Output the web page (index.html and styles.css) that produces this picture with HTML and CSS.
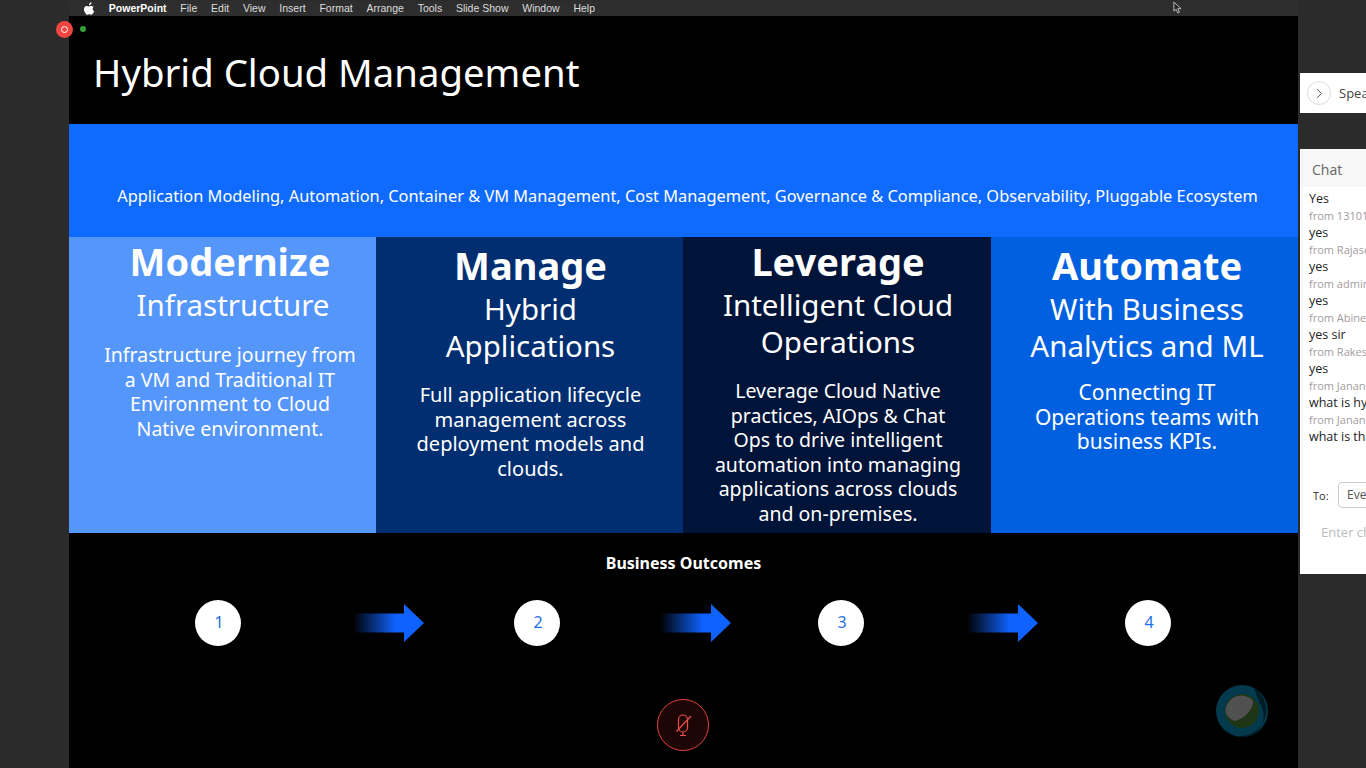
FILE: index.html
```html
<!DOCTYPE html>
<html>
  <head>
    <meta name="viewport" content="width=device-width,initial-scale=1.0" />
    <title>Hybrid Cloud Management</title>
    <link rel="stylesheet" href="styles.css">
  </head>
  <body>
    <div id="main">
      <div class="gutter">
        <div class="rec"><span class="rec-ring"></span></div>
      </div>

      <div class="stage">
        <div class="menubar">
          <svg class="apple" viewBox="0 0 14 16" width="11" height="13">
            <path fill="#fff" d="M9.6 0c.1 1-.3 1.9-.8 2.6-.6.7-1.5 1.2-2.4 1.1-.1-.9.3-1.9.8-2.5C7.8.6 8.8.1 9.6 0zM12.6 5.5c-1 .6-1.6 1.6-1.6 2.8 0 1.400.8 2.500 2 3-.4 1-.8 1.900-1.400 2.800-.7 1-1.400 1.900-2.400 1.900-1 0-1.300-.6-2.500-.6s-1.500.6-2.500.6c-1 0-1.800-1-2.400-2C.6 12.600 0 10.600 0 8.900c0-2.700 1.700-4.200 3.500-4.200 1 0 1.800.7 2.500.7.600 0 1.600-.7 2.800-.7 1.500 0 2.800.7 3.800 1.800z"/>
          </svg>
          <span class="menu-app">PowerPoint</span>
          <span>File</span>
          <span>Edit</span>
          <span>View</span>
          <span>Insert</span>
          <span>Format</span>
          <span>Arrange</span>
          <span>Tools</span>
          <span>Slide Show</span>
          <span>Window</span>
          <span>Help</span>
          <svg class="cursor" viewBox="0 0 10 14" width="9" height="13">
            <path fill="#222" stroke="#ccc" stroke-width="1" d="M1 1v10l2.500-2 1.800 4 1.800-.8-1.800-3.900H9z"/>
          </svg>
        </div>

        <div class="slide">
          <span class="green-dot"></span>
          <h1 class="title">Hybrid Cloud Management</h1>

          <div class="banner">Application Modeling, Automation, Container &amp; VM Management, Cost Management, Governance &amp; Compliance, Observability, Pluggable Ecosystem</div>

          <div class="columns">
            <div class="col col-1">
              <h2>Modernize</h2>
              <h3>Infrastructure</h3>
              <p>Infrastructure journey from<br>a VM and Traditional IT<br>Environment to Cloud<br>Native environment.</p>
            </div>
            <div class="col col-2">
              <h2>Manage</h2>
              <h3>Hybrid<br>Applications</h3>
              <p>Full application lifecycle<br>management across<br>deployment models and<br>clouds.</p>
            </div>
            <div class="col col-3">
              <h2>Leverage</h2>
              <h3>Intelligent Cloud<br>Operations</h3>
              <p>Leverage Cloud Native<br>practices, AIOps &amp; Chat<br>Ops to drive intelligent<br>automation into managing<br>applications across clouds<br>and on-premises.</p>
            </div>
            <div class="col col-4">
              <h2>Automate</h2>
              <h3>With Business<br>Analytics and ML</h3>
              <p>Connecting IT<br>Operations teams with<br>business KPIs.</p>
            </div>
          </div>

          <div class="outcomes">Business Outcomes</div>
          <div class="steps">
            <div class="step">1</div>
            <svg class="arrow arrow-1" viewBox="0 0 71 38" width="71" height="38"><use href="#arrow-shape"/></svg>
            <div class="step step-2">2</div>
            <svg class="arrow arrow-2" viewBox="0 0 71 38" width="71" height="38"><use href="#arrow-shape"/></svg>
            <div class="step step-3">3</div>
            <svg class="arrow arrow-3" viewBox="0 0 71 38" width="71" height="38"><use href="#arrow-shape"/></svg>
            <div class="step step-4">4</div>
          </div>

          <div class="mic">
            <svg viewBox="0 0 20 24" width="20" height="24" fill="none" stroke="#e8504a" stroke-width="1.200">
              <rect x="5.500" y="2" width="9" height="17" rx="4.500"/>
              <path d="M10 19v3M7 22.500h6M3.500 18.500L18 3"/>
            </svg>
          </div>

          <svg class="blob" viewBox="0 0 52 52" width="52" height="52">
            <circle cx="26" cy="26" r="26" fill="#033a4e"/>
            <path d="M38 3a26 26 0 0 1-26 45l-3-5a20 20 0 0 0 35-24z" fill="#021c26"/>
            <circle cx="26" cy="26" r="17" fill="#1e3616"/>
            <path d="M9.500 28a16 16 0 0 1 28-12c-1 9-9 18-19 20a16 16 0 0 1-9-8z" fill="#505050"/>
          </svg>
        </div>
      </div>

      <div class="side">
        <div class="speaker">
          <span class="speaker-btn">
            <svg viewBox="0 0 8 12" width="7" height="11" fill="none" stroke="#555" stroke-width="1.100"><path d="M1 1l5.500 5L1 11"/></svg>
          </span>
          <span class="speaker-name">Speaker</span>
        </div>
        <div class="chat">
          <div class="chat-head">Chat</div>
          <ul class="messages">
            <li>Yes</li>
            <li class="from">from 131012</li>
            <li>yes</li>
            <li class="from">from Rajasekar</li>
            <li>yes</li>
            <li class="from">from admin</li>
            <li>yes</li>
            <li class="from">from Abinesh</li>
            <li>yes sir</li>
            <li class="from">from Rakesh</li>
            <li>yes</li>
            <li class="from">from Janani</li>
            <li>what is hybrid</li>
            <li class="from">from Janani</li>
            <li>what is the</li>
          </ul>
          <div class="to">
            <span class="to-label">To:</span>
            <span class="to-select">Everyone</span>
          </div>
          <div class="enter">Enter chat message</div>
        </div>
      </div>
    </div>

    <svg width="0" height="0" class="defs">
      <defs>
        <linearGradient id="arrow-fade" x1="0" x2="1" y1="0" y2="0">
          <stop offset="0" stop-color="#0f62fe" stop-opacity="0"/>
          <stop offset="0.6" stop-color="#0f62fe"/>
        </linearGradient>
        <path id="arrow-shape" fill="url(#arrow-fade)" d="M0 9.500h51V0l20 19-20 19v-9.500H0z"/>
      </defs>
    </svg>
  </body>
</html>
```

FILE: styles.css
```css
html, body {
  margin: 0;
  height: 768px;
  overflow: hidden;
  background: #2b2b2b;
}
body {
  font-family: "Noto Sans", "Open Sans", sans-serif;
}
h1, h2, h3, p, ul {
  margin: 0;
  padding: 0;
  font-weight: normal;
}
.defs {
  position: absolute;
}

#main {
  display: flex;
  height: 768px;
  padding-top: 1px;
  box-sizing: border-box;
}
.gutter {
  width: 69px;
  flex: none;
  position: relative;
}
.rec {
  position: absolute;
  left: 56px;
  top: 20px;
  width: 17px;
  height: 17px;
  border-radius: 50%;
  background: #f04540;
  display: flex;
  align-items: center;
  justify-content: center;
  z-index: 2;
}
.rec-ring {
  width: 5px;
  height: 5px;
  border: 1px solid #fff;
  border-radius: 50%;
}

.stage {
  width: 1229px;
  flex: none;
  display: flex;
  flex-direction: column;
}
.menubar {
  height: 15px;
  background: #2e2e2e;
  display: flex;
  align-items: center;
  gap: 13.800px;
  padding-left: 15px;
  color: #ddd;
  font: 10.500px/15px "Liberation Sans", sans-serif;
  position: relative;
}
.menu-app {
  font-weight: bold;
  color: #fff;
}
.cursor {
  position: absolute;
  left: 1104px;
  top: 0;
}

.slide {
  flex: 1;
  background: #000;
  position: relative;
  color: #fff;
}
.green-dot {
  position: absolute;
  left: 11px;
  top: 10px;
  width: 6px;
  height: 6px;
  border-radius: 50%;
  background: #35a13a;
}
.title {
  height: 108px;
  padding-left: 24px;
  box-sizing: border-box;
  font-size: 38.300px;
  line-height: 112px;
}
.banner {
  height: 113px;
  background: #0f6bff;
  box-sizing: border-box;
  padding: 60px 0 0 8px;
  text-align: center;
  font-size: 16.350px;
  line-height: 24px;
  white-space: nowrap;
}

.columns {
  display: grid;
  grid-template-columns: 307px 307px 308px 307px;
  height: 296px;
  text-align: center;
}
.col {
  box-sizing: border-box;
}
.col h2 {
  font-size: 38px;
  line-height: 46px;
  font-weight: bold;
  margin-bottom: 2px;
}
.col h3 {
  font-size: 29.500px;
  line-height: 37px;
}
.col p {
  font-size: 19.500px;
  line-height: 24.500px;
}
.col-1 {
  background: #5596fb;
  padding: 1px 0 0 15px;
}
.col-1 h3 {
  padding-left: 6px;
}
.col-1 p {
  padding-top: 20px;
}
.col-2 {
  background: #002e70;
  padding: 5px 0 0 2px;
}
.col-2 p {
  font-size: 20px;
  padding-top: 19px;
}
.col-3 {
  background: #001339;
  padding: 1px 0 0 2px;
}
.col-3 p {
  padding-top: 19px;
}
.col-4 {
  background: #0060e0;
  padding: 5px 0 0 5px;
}
.col-4 p {
  font-size: 21px;
  line-height: 24.500px;
  padding-top: 16px;
}

.outcomes {
  text-align: center;
  font-weight: bold;
  font-size: 16px;
  line-height: 20px;
  padding-top: 20px;
}
.steps {
  display: flex;
  align-items: center;
  padding: 27px 0 0 126px;
}
.step {
  width: 46px;
  height: 46px;
  flex: none;
  box-sizing: border-box;
  padding-left: 2px;
  border-radius: 50%;
  background: #fff;
  color: #1f6fe8;
  font-size: 16px;
  line-height: 44px;
  text-align: center;
}
.arrow {
  flex: none;
}
.arrow-1 {
  margin-left: 112px;
}
.step-2 {
  margin-left: 90px;
}
.arrow-2 {
  margin-left: 100px;
}
.step-3 {
  margin-left: 87px;
}
.arrow-3 {
  margin-left: 103px;
}
.step-4 {
  margin-left: 87px;
}

.mic {
  position: absolute;
  left: 588px;
  top: 683px;
  width: 50px;
  height: 50px;
  border: 1px solid #e0423c;
  border-radius: 50%;
  background: #1e0606;
  display: flex;
  align-items: center;
  justify-content: center;
}
.blob {
  position: absolute;
  left: 1147px;
  top: 669px;
}

.side {
  flex: 1;
  min-width: 0;
  margin-left: 2px;
  overflow: hidden;
  font-family: "Open Sans", sans-serif;
}
.speaker {
  margin-top: 72px;
  height: 40px;
  background: #fff;
  display: flex;
  align-items: center;
  padding-left: 7px;
  white-space: nowrap;
  color: #444;
  font-size: 13px;
}
.speaker-btn {
  width: 24px;
  height: 24px;
  box-sizing: border-box;
  flex: none;
  border: 1px solid #ddd;
  border-radius: 50%;
  display: flex;
  align-items: center;
  justify-content: center;
  margin-right: 8px;
}
.chat {
  margin-top: 36px;
  height: 425px;
  background: #fff;
  white-space: nowrap;
}
.chat-head {
  height: 38px;
  background: #f8f8f8;
  color: #666;
  font-size: 14px;
  line-height: 42px;
  padding-left: 12px;
}
.messages {
  list-style-type: none;
  padding: 3px 0 0 9px;
  height: 295px;
  box-sizing: border-box;
  font-size: 12.500px;
  line-height: 17px;
  color: #222;
}
.messages .from {
  font-size: 11px;
  color: #a39a9e;
}
.to {
  display: flex;
  align-items: center;
  padding-left: 13px;
  font-size: 11px;
  color: #333;
}
.to-label {
  width: 25px;
  flex: none;
}
.to-select {
  flex: none;
  border: 1px solid #ccc;
  border-radius: 4px;
  padding: 0 8px;
  font-size: 12px;
  line-height: 24px;
  color: #555;
}
.enter {
  padding: 15px 0 0 21px;
  font-size: 13px;
  color: #bbb;
}
```
